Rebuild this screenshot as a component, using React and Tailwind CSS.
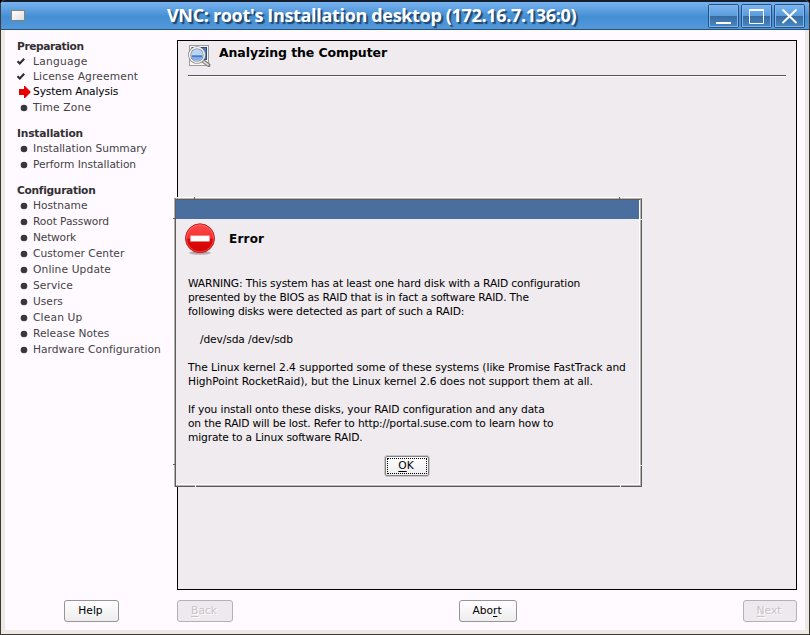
const steps = [
  {
    title: "Preparation",
    track: "tracking-[-0.42px]",
    items: [
      { label: "Language", mark: "done", size: "h-[15px]", track: "tracking-[0.24px]" },
      { label: "License Agreement", mark: "done", size: "h-[15px]", track: "tracking-[0.14px]" },
      { label: "System Analysis", mark: "current", size: "h-[15px]", track: "tracking-[-0.12px]" },
      { label: "Time Zone", mark: "todo", size: "h-4", track: "tracking-[0.18px]" },
    ],
  },
  {
    title: "Installation",
    track: "tracking-[-0.2px]",
    items: [
      { label: "Installation Summary", mark: "todo", size: "h-[15px]", track: "tracking-[0px]" },
      { label: "Perform Installation", mark: "todo", size: "h-4", track: "tracking-[-0.06px]" },
    ],
  },
  {
    title: "Configuration",
    track: "tracking-[-0.3px]",
    items: [
      { label: "Hostname", mark: "todo", size: "h-[15px]", track: "tracking-[0px]" },
      { label: "Root Password", mark: "todo", size: "h-4", track: "tracking-[-0.1px]" },
      { label: "Network", mark: "todo", size: "h-4", track: "tracking-[-0.2px]" },
      { label: "Customer Center", mark: "todo", size: "h-4", track: "tracking-[0.02px]" },
      { label: "Online Update", mark: "todo", size: "h-4", track: "tracking-[0.13px]" },
      { label: "Service", mark: "todo", size: "h-4", track: "tracking-[0.06px]" },
      { label: "Users", mark: "todo", size: "h-4", track: "tracking-[0px]" },
      { label: "Clean Up", mark: "todo", size: "h-4", track: "tracking-[0.16px]" },
      { label: "Release Notes", mark: "todo", size: "h-4", track: "tracking-[0.05px]" },
      { label: "Hardware Configuration", mark: "todo", size: "h-4", track: "tracking-[0.03px]" },
    ],
  },
];

const message = [
  { text: "WARNING: This system has at least one hard disk with a RAID configuration", track: "tracking-[-0.146px]" },
  { text: "presented by the BIOS as RAID that is in fact a software RAID. The", track: "tracking-[-0.185px]" },
  { text: "following disks were detected as part of such a RAID:", track: "tracking-[-0.14px]" },
  { text: "", track: "" },
  { text: "/dev/sda /dev/sdb", track: "tracking-[-0.12px] pl-3" },
  { text: "", track: "" },
  { text: "The Linux kernel 2.4 supported some of these systems (like Promise FastTrack and", track: "tracking-[-0.03px]" },
  { text: "HighPoint RocketRaid), but the Linux kernel 2.6 does not support them at all.", track: "tracking-[-0.07px]" },
  { text: "", track: "" },
  { text: "If you install onto these disks, your RAID configuration and any data", track: "tracking-[-0.1px]" },
  { text: "on the RAID will be lost. Refer to http://portal.suse.com to learn how to", track: "tracking-[-0.17px]" },
  { text: "migrate to a Linux software RAID.", track: "tracking-[-0.15px]" },
];

function Mark({ kind }) {
  if (kind === "done") {
    return (
      <svg className="ml-px h-[15px] w-[15px]" viewBox="0 0 15 15" fill="none">
        <path d="M0.5 7.2L2.8 9.5L7.2 4.8" stroke="#302d30" strokeWidth="2.1" />
      </svg>
    );
  }
  if (kind === "current") {
    return (
      <svg className="ml-[3px] h-[15px] w-[13px]" viewBox="0 0 13 15">
        <path d="M0 5h5V2h1l5.5 5.5v1L6 14H5v-3H0z" fill="#e60000" />
      </svg>
    );
  }
  return (
    <svg className="ml-[4px] h-[15px] w-3" viewBox="0 0 12 15">
      <circle cx="4" cy="8" r="3.3" fill="#3a373a" />
    </svg>
  );
}

function Sidebar() {
  return (
    <nav className="flex w-[172px] shrink-0 flex-col gap-2.5 pt-2 pl-[11px] text-[#454245]">
      {steps.map((group) => (
        <section key={group.title}>
          <h2 className={`h-4 pt-px pl-px text-[10.67px] leading-4 font-bold text-[#333033] ${group.track}`}>
            {group.title}
          </h2>
          {group.items.map((item) => (
            <div key={item.label} className={`flex items-center ${item.size}`}>
              <div className="flex w-[17px] shrink-0">
                <Mark kind={item.mark} />
              </div>
              <span
                className={`whitespace-nowrap leading-[15px] ${item.track} ${item.mark === "current" ? "text-black" : ""}`}
              >
                {item.label}
              </span>
            </div>
          ))}
        </section>
      ))}
    </nav>
  );
}

function Button({ children, width, disabled }) {
  const look = disabled
    ? "border-[#b4b0b4] bg-[#eee9ee] text-[#c7c3c7] [text-shadow:1px_1px_0_#fff]"
    : "border-[#979397] bg-linear-to-b from-white to-[#ededee] text-black";
  return (
    <button
      disabled={disabled}
      className={`flex h-[22px] items-center justify-center rounded-[3px] border pr-0.5 text-[10.67px] leading-5 ${look} ${width}`}
    >
      {children}
    </button>
  );
}

function Key({ children }) {
  return <span className="underline underline-offset-2">{children}</span>;
}

function TitleButton({ children }) {
  return (
    <div className="flex h-6 w-[31px] rounded-[2px] border border-[#25507f]">
      <div className="flex flex-1 items-center justify-center border border-[#81b5ec] bg-[#6caaea]">
        {children}
      </div>
    </div>
  );
}

function GlassFill({ id }) {
  return (
    <>
      <defs>
        <linearGradient id={id} x1="0" x2="0" y1="0" y2="1">
          <stop offset="0" stopColor="#79b3f0" />
          <stop offset="0.49" stopColor="#5a9bdc" />
          <stop offset="0.5" stopColor="#386b9f" />
          <stop offset="1" stopColor="#4485c4" />
        </linearGradient>
      </defs>
      <rect width="27" height="20" fill={`url(#${id})`} />
    </>
  );
}

function TitleBar() {
  return (
    <header className="relative flex h-[30px] items-center border-t-2 border-b border-t-[#151d2b] border-b-[#26527e] bg-linear-to-b from-[#78b2ef] from-0% via-[#438fd3] via-55% to-[#5498da] to-100% pr-[5px] pl-[11px]">
      <div className="h-[11px] w-3.5 border border-[#87807a] bg-linear-to-br from-white to-[#dedede]" />
      <h1 className="ml-[142px] flex-1 whitespace-nowrap font-['Open_Sans',sans-serif] text-[18px] leading-[27px] font-bold tracking-[-0.33px] text-white [text-shadow:2px_2px_1px_#20466f]">
        VNC: root's Installation desktop (172.16.7.136:0)
      </h1>
      <div className="flex gap-0.5">
        <TitleButton>
          <svg width="27" height="20" viewBox="0 0 27 20">
            <GlassFill id="glass-min" />
            <path d="M6 17h15" stroke="#fff" strokeWidth="2" />
          </svg>
        </TitleButton>
        <TitleButton>
          <svg width="27" height="20" viewBox="0 0 27 20">
            <GlassFill id="glass-max" />
            <path d="M6.5 4v13.5h14V4" fill="none" stroke="#fff" />
            <path d="M6 4h15" stroke="#fff" strokeWidth="2" />
          </svg>
        </TitleButton>
        <TitleButton>
          <svg width="27" height="20" viewBox="0 0 27 20">
            <GlassFill id="glass-close" />
            <path d="M6.5 3.5L20.5 17M20.5 3.5L6.5 17" stroke="#fff" strokeWidth="2" />
          </svg>
        </TitleButton>
      </div>
    </header>
  );
}

function AnalyzeIcon() {
  return (
    <svg className="h-6 w-6" viewBox="0 0 24 24">
      <rect x="1.5" y="1.5" width="19" height="20" fill="#f7f7f5" stroke="#9c9c98" />
      <rect x="4" y="3.5" width="14.5" height="12" fill="#4b7cc4" stroke="#284a84" />
      <path d="M15 17l5.5 4" stroke="#777" strokeWidth="4" strokeLinecap="round" />
      <path d="M15.5 17.5l4.5 3.2" stroke="#d6d6d2" strokeWidth="2" strokeLinecap="round" />
      <circle cx="9" cy="11" r="7.4" fill="#b9d4f6" stroke="#777" strokeWidth="2.8" />
      <circle cx="9" cy="11" r="7.4" fill="none" stroke="#eeeeea" strokeWidth="1.6" />
      <path d="M3.2 11h11.6a5.8 5.8 0 0 1-11.6 0z" fill="#7fabec" />
      <path d="M4 12.2h10" stroke="#3561ae" />
      <path d="M5 15q4 2.5 8 0l-2 1.6H7z" fill="#c3dcf8" />
    </svg>
  );
}

function ErrorIcon() {
  return (
    <svg className="h-8 w-[30px]" viewBox="0 0 30 32">
      <defs>
        <linearGradient id="stop" x1="0" x2="0" y1="0" y2="1">
          <stop offset="0" stopColor="#ff4a4a" />
          <stop offset="0.5" stopColor="#f53030" />
          <stop offset="0.52" stopColor="#dc0808" />
          <stop offset="1" stopColor="#d60606" />
        </linearGradient>
      </defs>
      <ellipse cx="15" cy="29.8" rx="11" ry="2" fill="#b5b0b3" />
      <circle cx="15" cy="15.3" r="14.5" fill="url(#stop)" stroke="#bd2525" />
      <circle cx="15" cy="15.3" r="13.5" fill="none" stroke="#ff7777" strokeOpacity="0.5" />
      <rect x="5.5" y="12.8" width="19" height="5.5" fill="#fff" stroke="#f3a0a0" strokeWidth="0.5" />
    </svg>
  );
}

function Dialog() {
  return (
    <div className="absolute top-[197px] left-[174px] h-[290px] w-[468px] border-t border-l border-t-white border-l-[#b5b4b1] bg-[#efebee]">
      <div className="h-full border border-t-[#b5b4b1] border-r-[#5c5c59] border-b-[#5c5c59] border-l-[#5c5c59]">
        <div className="h-full border-t border-r border-b border-t-[#5c5c59] border-r-[#b5b4b1] border-b-[#b5b4b1]">
          <div className="flex h-full flex-col border-r border-b border-white">
            <div className="h-[19px] shrink-0 bg-[#4a6f9e]" />
            <div className="flex h-9 items-start pt-1 pl-[9px]">
              <ErrorIcon />
              <h3 className="ml-3.5 pt-2 text-[12px] leading-4 font-bold tracking-[0.2px]">Error</h3>
            </div>
            <div className="pt-[22px] pl-3">
              {message.map((line, i) => (
                <p key={i} className={`h-3.5 whitespace-nowrap leading-[14px] ${line.track}`}>
                  {line.text}
                </p>
              ))}
            </div>
            <div className="mt-[10px] ml-[208px] h-[22px] w-[46px] rounded-[3px] border border-[#c9c5c8]">
              <button className="flex h-5 w-11 rounded-[2px] border border-[#858285] bg-linear-to-b from-white to-[#ededee] p-px">
                <span className="flex h-4 w-full items-center justify-center border border-dotted border-black pr-0.5 leading-[14px]">
                  <Key>O</Key>K
                </span>
              </button>
            </div>
          </div>
        </div>
      </div>
      <i className="absolute -top-px left-[19px] h-0.5 w-px bg-[#5c5c59]" />
      <i className="absolute -top-px left-[444px] h-0.5 w-px bg-[#5c5c59]" />
      <i className="absolute top-5 -left-0.5 h-px w-0.5 bg-[#5c5c59]" />
      <i className="absolute top-[266px] -left-0.5 h-px w-0.5 bg-[#5c5c59]" />
      <i className="absolute top-[21px] right-0 h-px w-0.5 bg-white" />
      <i className="absolute top-[267px] right-0 h-px w-0.5 bg-white" />
      <i className="absolute bottom-0 left-5 h-0.5 w-px bg-white" />
      <i className="absolute bottom-0 left-[445px] h-0.5 w-px bg-white" />
    </div>
  );
}

export default function App() {
  return (
    <div className="relative h-[635px] w-[810px] overflow-hidden bg-black font-['DejaVu_Sans',sans-serif] text-[10.67px] text-black">
      <div className="flex h-full flex-col overflow-hidden rounded-t-[5px] border-x border-b border-[#3d3935] bg-[#eeeae3]">
        <div className="-mx-px">
          <TitleBar />
        </div>
        <main className="mr-1 ml-1 flex h-[600px] flex-col bg-[#fefaff]">
          <div className="flex h-[560px]">
            <Sidebar />
            <section className="mt-2.5 h-[550px] w-[620px] border border-black bg-[#efebee] px-2.5">
              <div className="flex h-[34px] pt-[3px]">
                <AnalyzeIcon />
                <h2 className="ml-[7px] text-[12.5px] leading-[17px] font-bold tracking-[-0.1px]">
                  Analyzing the Computer
                </h2>
              </div>
              <div className="h-0.5 border-t border-b border-t-[#575457] border-b-white" />
            </section>
          </div>
          <footer className="flex h-10 items-start pt-2.5 pr-2 pl-[59px]">
            <Button width="w-[55px]">Help</Button>
            <div className="ml-[58px] flex flex-1 justify-between">
              <Button width="w-14" disabled>
                <Key>B</Key>ack
              </Button>
              <Button width="w-[58px]">
                Abo<Key>r</Key>t
              </Button>
              <Button width="w-[54px]" disabled>
                <Key>N</Key>ext
              </Button>
            </div>
          </footer>
        </main>
      </div>
      <Dialog />
    </div>
  );
}
